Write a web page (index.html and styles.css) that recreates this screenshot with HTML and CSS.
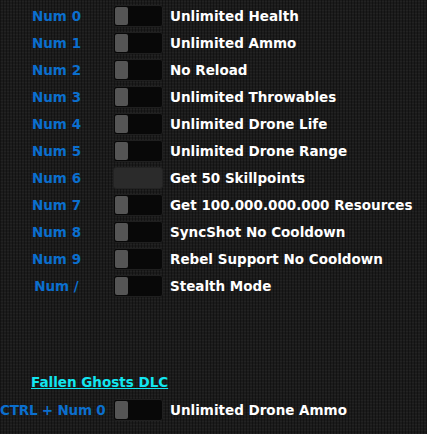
FILE: index.html
```html
<!DOCTYPE html>
<html>
<head>
<meta charset="utf-8">
<link rel="stylesheet" href="styles.css">
</head>
<body>
<div class="panel">
  <div class="list">
    <div class="row"><span class="key">Num 0</span><span class="toggle"><span class="knob"></span></span><span class="label">Unlimited Health</span></div>
    <div class="row"><span class="key">Num 1</span><span class="toggle"><span class="knob"></span></span><span class="label">Unlimited Ammo</span></div>
    <div class="row"><span class="key">Num 2</span><span class="toggle"><span class="knob"></span></span><span class="label">No Reload</span></div>
    <div class="row"><span class="key">Num 3</span><span class="toggle"><span class="knob"></span></span><span class="label">Unlimited Throwables</span></div>
    <div class="row"><span class="key">Num 4</span><span class="toggle"><span class="knob"></span></span><span class="label">Unlimited Drone Life</span></div>
    <div class="row"><span class="key">Num 5</span><span class="toggle"><span class="knob"></span></span><span class="label">Unlimited Drone Range</span></div>
    <div class="row"><span class="key">Num 6</span><span class="button"></span><span class="label">Get 50 Skillpoints</span></div>
    <div class="row"><span class="key">Num 7</span><span class="toggle"><span class="knob"></span></span><span class="label">Get 100.000.000.000 Resources</span></div>
    <div class="row"><span class="key">Num 8</span><span class="toggle"><span class="knob"></span></span><span class="label">SyncShot No Cooldown</span></div>
    <div class="row"><span class="key">Num 9</span><span class="toggle"><span class="knob"></span></span><span class="label">Rebel Support No Cooldown</span></div>
    <div class="row"><span class="key">Num /</span><span class="toggle"><span class="knob"></span></span><span class="label">Stealth Mode</span></div>
  </div>
  <div class="section">
    <a class="dlc">Fallen Ghosts DLC</a>
    <div class="row"><span class="key key-wide">CTRL + Num 0</span><span class="toggle"><span class="knob"></span></span><span class="label">Unlimited Drone Ammo</span></div>
  </div>
</div>
</body>
</html>
```

FILE: styles.css
```css
html, body {
  margin: 0;
  padding: 0;
}
body {
  width: 427px;
  height: 434px;
  overflow: hidden;
  background-color: #1b1b1b;
  background-image:
    repeating-linear-gradient(90deg, rgba(0,0,0,0.35) 0 1px, transparent 1px 3px),
    repeating-linear-gradient(0deg, rgba(255,255,255,0.03) 0 1px, transparent 1px 3px);
  font-family: "DejaVu Sans", sans-serif;
  font-weight: bold;
  font-size: 13.5px;
}
.panel {
  display: flex;
  flex-direction: column;
  padding-top: 2px;
}
.row {
  display: flex;
  align-items: center;
  height: 27px;
}
.key {
  width: 113px;
  flex: none;
  text-align: center;
  color: #0b6fce;
  white-space: nowrap;
}
.key-wide {
  text-align: left;
  padding-left: 0;
  letter-spacing: -0.2px;
}
.toggle, .button {
  flex: none;
  width: 50px;
  height: 22px;
  box-sizing: border-box;
  border-radius: 3px;
}
.toggle {
  background: #080808;
  border: 1px solid #1f1f1f;
  padding: 1px;
  display: flex;
}
.knob {
  width: 13px;
  height: 18px;
  background: #555555;
  border-radius: 2px;
}
.button {
  background: #2b2b2b;
  border: 1px solid #232323;
}
.label {
  margin-left: 7px;
  color: #ffffff;
  white-space: nowrap;
}
.section {
  margin-top: 70px;
  display: flex;
  flex-direction: column;
}
.dlc {
  margin-left: 31px;
  color: #12e6f0;
  text-decoration: underline;
  height: 27px;
  line-height: 27px;
}
```
